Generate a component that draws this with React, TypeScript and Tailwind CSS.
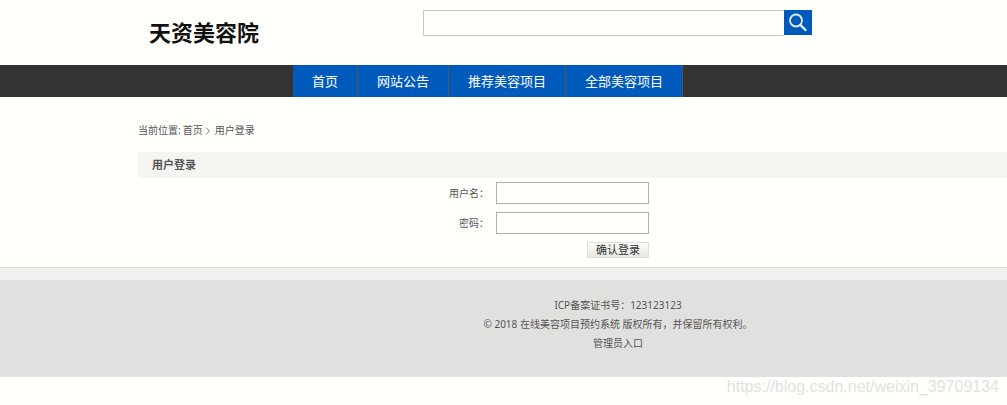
const navItems = ["首页", "网站公告", "推荐美容项目", "全部美容项目"];

const fields = [
  { id: "username", label: "用户名：", type: "text" },
  { id: "password", label: "密码：", type: "password" },
];

function Header() {
  return (
    <header className="flex h-[65px] items-start pl-[149px]">
      <h1 className="w-[274px] pt-4 text-[22px] leading-8 font-bold text-[#111111]">
        天资美容院
      </h1>
      <form className="flex items-start pt-[10px]">
        <input
          type="text"
          aria-label="搜索"
          className="h-[26px] w-[361px] border border-r-0 border-[#c8c8c5] px-2 text-xs outline-none"
        />
        <button
          type="button"
          aria-label="搜索"
          className="flex h-[25px] w-7 items-center justify-center bg-[#005abb]"
        >
          <svg viewBox="0 0 28 25" className="h-[25px] w-7" fill="none" stroke="#dfeaf7">
            <circle cx="12" cy="10.5" r="6" strokeWidth="1.8" />
            <path d="M16.3 14.8L21.5 20" strokeWidth="2.4" strokeLinecap="round" />
          </svg>
        </button>
      </form>
    </header>
  );
}

function Nav() {
  return (
    <nav className="flex h-8 bg-[#333331] pl-[293px]">
      {navItems.map((item) => (
        <a
          key={item}
          href="#"
          className="border-r border-[#50565a] bg-[#005abb] px-[19px] text-[13px] leading-8 text-white"
        >
          {item}
        </a>
      ))}
    </nav>
  );
}

function LoginForm() {
  return (
    <form className="flex w-[511px] flex-col gap-2 pt-1 pb-[9px]">
      {fields.map((field) => (
        <div key={field.id} className="flex items-center justify-end gap-[7px]">
          <label htmlFor={field.id}>{field.label}</label>
          <input
            id={field.id}
            type={field.type}
            className="h-[22px] w-[153px] border border-[#b0b0ad] px-1 text-xs outline-none"
          />
        </div>
      ))}
      <button
        type="button"
        className="flex h-4 w-[62px] items-center justify-center self-end border border-[#dededb] bg-linear-to-b from-[#fbfbf8] to-[#e8e8e5] text-[11px] text-[#333333]"
      >
        确认登录
      </button>
    </form>
  );
}

function Footer() {
  return (
    <footer className="border-t border-[#d9d9d7] bg-[#f1f1ef] pt-3">
      <div className="bg-[#e0e0de] pt-4 pb-6 pl-[229px] text-center leading-[19px]">
        <p>ICP备案证书号：123123123</p>
        <p>© 2018 在线美容项目预约系统 版权所有，并保留所有权利。</p>
        <p>
          <a href="#">管理员入口</a>
        </p>
      </div>
    </footer>
  );
}

export default function App() {
  return (
    <div
      lang="zh-CN"
      className="min-h-screen overflow-hidden bg-[#fffffc] font-['Noto_Sans','Noto_Sans_CJK_SC',sans-serif] text-[10px] text-[#555555]"
    >
      <Header />
      <Nav />
      <main className="pl-[138px]">
        <div className="flex items-center pt-6 pb-3 leading-[19px]">
          <span>当前位置:</span>
          <a href="#" className="ml-[2px]">
            首页
          </a>
          <svg viewBox="0 0 6 8" className="mr-1 ml-[2px] h-2 w-[6px]" fill="none" stroke="#777777">
            <path d="M1 0.5L4.5 4L1 7.5" />
          </svg>
          <span>用户登录</span>
        </div>
        <h2 className="bg-[#f4f4f1] pl-[14px] text-[11px] leading-[26px] font-bold">
          用户登录
        </h2>
        <LoginForm />
      </main>
      <Footer />
      <p className="pr-2 text-right font-['Liberation_Sans',sans-serif] text-base leading-5 text-[#e2e2e0]">
        https://blog.csdn.net/weixin_39709134
      </p>
    </div>
  );
}
